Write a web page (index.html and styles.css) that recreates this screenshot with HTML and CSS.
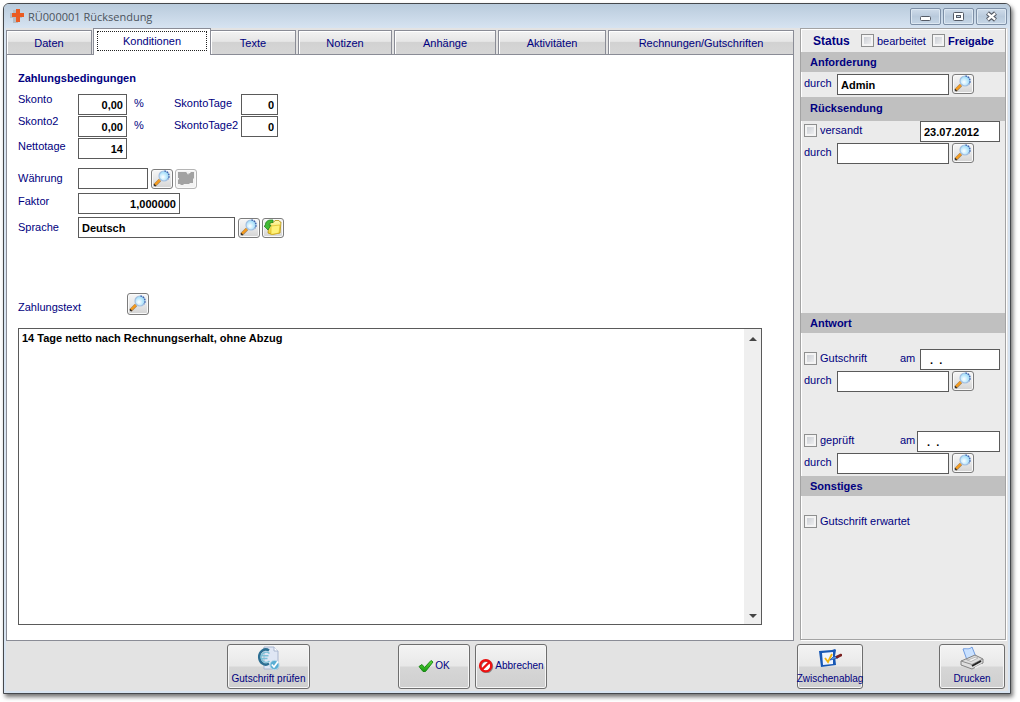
FILE: index.html
```html
<!DOCTYPE html>
<html lang="de">
<head>
<meta charset="utf-8">
<title>RÜ000001 Rücksendung</title>
<link rel="stylesheet" href="styles.css">
</head>
<body>
<svg class="defs" aria-hidden="true">
  <defs>
    <linearGradient id="handle" x1="0" y1="0" x2="1" y2="1"><stop offset="0" stop-color="#ffb53a"/><stop offset="1" stop-color="#d87708"/></linearGradient>
    <radialGradient id="lens" cx=".4" cy=".6"><stop offset="0" stop-color="#ffffff"/><stop offset="1" stop-color="#a5e0fb"/></radialGradient>
    <linearGradient id="folder" x1="0" y1="0" x2="0" y2="1"><stop offset="0" stop-color="#fffbb0"/><stop offset="1" stop-color="#f0cf25"/></linearGradient>
    <linearGradient id="tick" x1="0" y1="0" x2="0" y2="1"><stop offset="0" stop-color="#63dc3c"/><stop offset="1" stop-color="#159a10"/></linearGradient>
  </defs>
  <symbol id="search" viewBox="0 0 20 18">
    <path d="M8 10 2.500 15.500" stroke="#9a8468" stroke-width="3.200"/>
    <path d="M8 9.800 2.700 15" stroke="#f59a1c" stroke-width="2.400"/>
    <path d="m2 14.500 1.500 1.500" stroke="#222" stroke-width="1.400"/>
    <circle cx="12" cy="6" r="5" fill="url(#lens)" stroke="#a3bfe0" stroke-width="1.200"/>
    <path d="M12.500 1A5 5 0 0 1 16 9" fill="none" stroke="#3e66b0" stroke-width="1.400" stroke-dasharray="1.500 1"/>
  </symbol>
</svg>

<div class="window">
  <header class="titlebar">
    <svg class="app-icon" viewBox="0 0 14 14"><path d="M3 1h5v3h4v5H8v5H3V9H0V4h3z" fill="#b4bcc4"/><path d="M6 0h4v4h4v4h-4v5H6V8H2V4h4z" fill="#ea5b22"/></svg>
    <h1 class="title">RÜ000001 Rücksendung</h1>
    <button class="winbtn" aria-label="Minimieren"><svg viewBox="0 0 29 15"><rect x="9.500" y="7.500" width="10" height="4" rx="1" fill="#fff" stroke="#555b66"/></svg></button>
    <button class="winbtn" aria-label="Maximieren"><svg viewBox="0 0 29 15"><rect x="9.500" y="3.500" width="10" height="8" rx="1" fill="#fff" stroke="#555b66"/><rect x="12.500" y="6.500" width="4" height="2" fill="#c5d5e5" stroke="#555b66"/></svg></button>
    <button class="winbtn" aria-label="Schließen"><svg viewBox="0 0 29 15"><path d="m10.500 4 8 7m0-7-8 7" stroke="#555b66" stroke-width="4.400"/><path d="m10.800 4.300 7.400 6.400m0-6.400-7.400 6.400" stroke="#fff" stroke-width="2.200"/></svg></button>
  </header>

  <div class="client">
    <div class="main">
      <section class="left">
        <nav class="tabs" role="tablist">
          <button class="tab t-s" role="tab">Daten</button>
          <button class="tab active" role="tab" aria-selected="true"><span>Konditionen</span></button>
          <button class="tab t-s" role="tab">Texte</button>
          <button class="tab t-m" role="tab">Notizen</button>
          <button class="tab t-l" role="tab">Anhänge</button>
          <button class="tab t-xl" role="tab">Aktivitäten</button>
          <button class="tab t-fill" role="tab">Rechnungen/Gutschriften</button>
        </nav>
        <div class="panel">
          <h2 class="heading">Zahlungsbedingungen</h2>
          <div class="row">
            <label class="lbl high" for="skonto">Skonto</label>
            <input class="num w-num" id="skonto" value="0,00"><span class="pct">%</span>
            <label class="lbl2" for="stage">SkontoTage</label><input class="num w-day" id="stage" value="0">
          </div>
          <div class="row">
            <label class="lbl high" for="skonto2">Skonto2</label>
            <input class="num w-num" id="skonto2" value="0,00"><span class="pct">%</span>
            <label class="lbl2" for="stage2">SkontoTage2</label><input class="num w-day" id="stage2" value="0">
          </div>
          <div class="row">
            <label class="lbl" for="netto">Nettotage</label><input class="num w-num" id="netto" value="14">
          </div>
          <div class="row gap-top">
            <label class="lbl low" for="waehrung">Währung</label><input class="w-cur" id="waehrung">
            <button class="iconbtn" aria-label="Währung suchen"><svg><use href="#search"/></svg></button>
            <button class="iconbtn off" disabled aria-label="Währung öffnen"><svg viewBox="0 0 20 18"><path d="M2 2h8l1 1h3l1-1h3v6l-1 1v4h-3l-1 1H8l-1 1H5l-1-1H2v-4l1-1V8H2z" fill="#a2a2a2"/><path d="m11 3.500 1.500.500L14 2" fill="none" stroke="#fff" stroke-width=".8"/></svg></button>
          </div>
          <div class="row row-f">
            <label class="lbl" for="faktor">Faktor</label><input class="num w-fac" id="faktor" value="1,000000">
          </div>
          <div class="row">
            <label class="lbl low" for="sprache">Sprache</label><input class="w-lang" id="sprache" value="Deutsch">
            <button class="iconbtn" aria-label="Sprache suchen"><svg><use href="#search"/></svg></button>
            <button class="iconbtn" aria-label="Sprache öffnen"><svg viewBox="0 0 20 18"><path d="m6 4 5-1 1-1.500h4l1 1.500h1l-1 11-8 1.500L5 14z" fill="url(#folder)" stroke="#b8920c" stroke-width=".8"/><path d="m8 7 9-1-1 8-8 1.500z" fill="#fff27a" stroke="#d6b018" stroke-width=".6"/><path d="M10 1C5 .5 2 2.500 2.500 6.500L1 7l4 4 3-5-1.800.2C6 4.500 7.500 3.500 10 3.500z" fill="#42bb35" stroke="#157a18" stroke-width=".7"/></svg></button>
          </div>
          <div class="row row-text">
            <label class="lbl-text" for="ztext">Zahlungstext</label>
            <button class="iconbtn tall" aria-label="Zahlungstext suchen"><svg><use href="#search"/></svg></button>
          </div>
          <div class="memo">
            <textarea id="ztext">14 Tage netto nach Rechnungserhalt, ohne Abzug</textarea>
            <div class="scroll">
              <svg viewBox="0 0 8 4"><path d="m0 4 4-4 4 4z" fill="#444"/></svg>
              <svg viewBox="0 0 8 4"><path d="m0 0 4 4 4-4z" fill="#444"/></svg>
            </div>
          </div>
        </div>
      </section>

      <aside class="side">
        <div class="status">
          <strong>Status</strong>
          <label class="check"><input type="checkbox">bearbeitet</label>
          <label class="check bold"><input type="checkbox">Freigabe</label>
        </div>
        <h3 class="bar">Anforderung</h3>
        <div class="body b-anf">
          <div class="srow"><label for="d1">durch</label><input class="who" id="d1" value="Admin"><button class="iconbtn" aria-label="Suchen"><svg><use href="#search"/></svg></button></div>
        </div>
        <h3 class="bar tall-bar">Rücksendung</h3>
        <div class="body b-rueck">
          <div class="srow"><label class="check grow"><input type="checkbox">versandt</label><input class="date" aria-label="Datum" value="23.07.2012"></div>
          <div class="srow"><label for="d2">durch</label><input class="who" id="d2"><button class="iconbtn" aria-label="Suchen"><svg><use href="#search"/></svg></button></div>
        </div>
        <h3 class="bar">Antwort</h3>
        <div class="body b-antw">
          <div class="srow"><label class="check grow"><input type="checkbox">Gutschrift</label><label class="am" for="g1">am</label><input class="date" id="g1" value="  .  ."></div>
          <div class="srow"><label for="d3">durch</label><input class="who" id="d3"><button class="iconbtn" aria-label="Suchen"><svg><use href="#search"/></svg></button></div>
          <div class="srow second"><label class="check grow"><input type="checkbox">geprüft</label><label class="am tight" for="g2">am</label><input class="date wide" id="g2" value="  .  ."></div>
          <div class="srow"><label for="d4">durch</label><input class="who" id="d4"><button class="iconbtn" aria-label="Suchen"><svg><use href="#search"/></svg></button></div>
        </div>
        <h3 class="bar">Sonstiges</h3>
        <div class="body b-sonst">
          <label class="check"><input type="checkbox">Gutschrift erwartet</label>
        </div>
      </aside>
    </div>

    <footer class="footer">
      <button class="big b-check">
        <svg viewBox="0 0 24 26"><path d="M7 1h10l4 4v18H7z" fill="#dfe6f4" stroke="#a9b6cf"/><path d="M17 1v4h4" fill="#fff" stroke="#a9b6cf"/><path d="M12 4.500A6.500 7.500 0 1 0 12 17.500" fill="none" stroke="#2d6f93" stroke-width="2.600"/><path d="M12.500 7.500a5 5 0 1 0 0 7.500M4.500 9.800h7M4.500 12.500h6" fill="none" stroke="#7cc0d8" stroke-width="1.600"/><circle cx="17.500" cy="19" r="4.600" fill="#5aaed4" stroke="#b9dbea"/><path d="m14.800 18.500 2.200 2.500 4-5.500" fill="none" stroke="#fff" stroke-width="1.700"/></svg>
        <span>Gutschrift prüfen</span>
      </button>
      <button class="big line b-ok">
        <svg viewBox="0 0 16 14"><path d="m1 7.500 3-2 2.500 3L13 1.500l2 1.500-7.500 9.500H5z" fill="url(#tick)" stroke="#12800f" stroke-width=".9" stroke-linejoin="round"/></svg>
        <span>OK</span>
      </button>
      <button class="big line b-cancel">
        <svg viewBox="0 0 16 14"><circle cx="8.400" cy="7.400" r="5.600" fill="#fff" stroke="#888" stroke-width="2.400"/><circle cx="7.700" cy="6.800" r="5.600" fill="none" stroke="#ee1111" stroke-width="2.400"/><path d="m4 10.500 7.500-7.500" stroke="#ee1111" stroke-width="2.400"/></svg>
        <span>Abbrechen</span>
      </button>
      <button class="big b-clip">
        <svg viewBox="0 0 24 26"><path d="m1 5 13-1 3-1 1 1-1 6 1 9-15 2-1-8z" fill="#1657b5"/><path d="m4 7 11-1v12l-10 1z" fill="#eef4ff"/><path d="m7 12 3 4 4-8" fill="none" stroke="#f1b40e" stroke-width="1.800"/><path d="m12 14 3-3 5-1v2l-4 1z" fill="#5f9bea" stroke="#1d57ad" stroke-width=".8"/><path d="m19 11 4-2" stroke="#7a2020" stroke-width="2.600" stroke-linecap="round"/></svg>
        <span>Zwischenablag</span>
      </button>
      <button class="big b-print">
        <svg viewBox="0 0 24 26"><path d="M3 3c3-1 6 1 9-2l4 10-9 3z" fill="#c9e1ff" stroke="#6f9be0"/><path d="m1 15 5-2 9-4 8 4v4l-11 6-11-4z" fill="#dedede" stroke="#828282"/><path d="m1 15 11 3.500L23 13" fill="none" stroke="#8c8c8c"/><path d="m5 13 6 2.500 7-3.500-2-1-8 3z" fill="#f8f8f8" stroke="#aaa" stroke-width=".8"/><path d="m12 20 9-5" stroke="#222" stroke-width="2"/><path d="m15 22 7-3.500" stroke="#eee" stroke-width="1.500"/></svg>
        <span>Drucken</span>
      </button>
    </footer>
  </div>
</div>
</body>
</html>
```
FILE: styles.css
```css
* { box-sizing: border-box; }

body {
  margin: 0;
  padding: 3px 9px 8px 3px;
  min-height: 100vh;
  display: flex;
  background: #fff;
  color: #000080;
  font: 11px/14px "Liberation Sans", Arial, sans-serif;
}

button, input, textarea { font: inherit; color: inherit; margin: 0; }
h1, h2, h3 { margin: 0; }
.defs { position: absolute; width: 0; height: 0; }

.window {
  flex: 1;
  min-width: 0;
  display: flex;
  flex-direction: column;
  border: 1px solid #45484c;
  border-radius: 6px 6px 0 0;
  background: #d8e4f1;
  padding: 0 2px 2px;
  box-shadow: 2px 3px 4px rgba(0, 0, 0, .55);
}

.titlebar {
  display: flex;
  align-items: center;
  height: 24px;
  padding: 0 1px 0 3px;
  margin: 0 -2px;
  border-radius: 5px 5px 0 0;
  background: linear-gradient(#b9cbdc, #d6e3f1);
}
.app-icon { width: 14px; height: 14px; margin: 0 4px 0 3px; }
.title { flex: 1; padding-top: 2px; font: 11px/16px "Open Sans", "Noto Sans", sans-serif; color: #4b535c; }
.winbtn {
  width: 31px;
  height: 17px;
  padding: 0;
  margin-right: 2px;
  border: 1px solid #7d8fa6;
  border-radius: 2px;
  background: linear-gradient(#cfdcea, #b9cadc 50%, #c6d6e6);
  box-shadow: inset 0 0 0 1px #dde8f2;
}
.winbtn svg { display: block; width: 29px; height: 15px; }

.client { flex: 1; display: flex; flex-direction: column; background: #e3e3e3; }
.main { flex: 1; display: flex; gap: 6px; padding-right: 2px; }
.left { flex: 1; min-width: 0; display: flex; flex-direction: column; }

.tabs { display: flex; align-items: flex-end; gap: 2px; height: 26px; }
.tab {
  height: 24px;
  padding: 0;
  border: 1px solid #8a8c96;
  border-bottom: 0;
  background: linear-gradient(#f3f3f3, #e6e6e6 45%, #d2d2d2 50%, #d6d6d6);
  box-shadow: inset 1px 1px 0 #fff;
}
.t-s { width: 86px; }
.t-m { width: 94px; }
.t-l { width: 102px; }
.t-xl { width: 108px; }
.t-fill { flex: 1; }
.tab.active {
  position: relative;
  z-index: 1;
  width: 118px;
  height: 27px;
  margin: 0 -3px -1px -1px;
  padding: 1px 3px 3px;
  background: #fff;
}
.tab.active span { display: block; height: 20px; line-height: 19px; border: 1px dotted #222; }

.panel {
  flex: 1;
  display: flex;
  flex-direction: column;
  padding: 16px 31px 15px 11px;
  border: 1px solid #8a8c96;
  background: #fff;
}
.heading { font-size: 11px; line-height: 14px; margin-bottom: 9px; }

input, textarea {
  border: 1px solid #5a5a5a;
  border-radius: 0;
  background: #fff;
  color: #000;
  font-weight: bold;
  outline: 0;
}
input { height: 21px; padding: 0 3px; }
.num { text-align: right; }

.row { display: flex; align-items: flex-start; height: 22px; }
.lbl { width: 60px; padding-top: 1px; }
.lbl.high { padding-top: 0; line-height: 10px; }
.lbl.low { padding-top: 3px; }
.pct { width: 47px; padding: 2px 0 0 7px; }
.lbl2 { width: 67px; padding-top: 2px; }
.w-num { width: 49px; }
.w-day { width: 37px; }
.w-cur { width: 70px; }
.w-fac { width: 102px; }
.w-lang { width: 157px; }
.gap-top { margin-top: 8px; }
.row-f { margin: 3px 0 2px; }
.row-text { margin: 54px 0 13px; }
.lbl-text { width: 109px; padding-top: 7px; }

.iconbtn {
  width: 22px;
  height: 20px;
  margin: 1px 0 0 3px;
  padding: 0;
  border: 1px solid #7c7c7c;
  border-radius: 3px;
  background: linear-gradient(#f6f6f6, #e8e8e8 50%, #d3d3d3);
  box-shadow: inset 0 0 0 1px #fafafa;
}
.iconbtn + .iconbtn { margin-left: 2px; }
.iconbtn svg { display: block; width: 20px; height: 18px; }
.iconbtn.tall { height: 22px; margin: 0; }
.iconbtn.off { border-color: #b5b5b5; background: #f3f3f3; }

.memo { flex: 1; display: flex; min-height: 120px; border: 1px solid #5a5a5a; }
.memo textarea { flex: 1; border: 0; padding: 2px 3px; resize: none; }
.scroll {
  display: flex;
  flex-direction: column;
  justify-content: space-between;
  align-items: center;
  width: 17px;
  padding: 8px 0 6px;
  background: #efefef;
}
.scroll svg { width: 8px; height: 4px; }

.side {
  width: 206px;
  margin-bottom: 1px;
  border: 1px solid #a3a3a3;
  background: #ebebeb;
  box-shadow: inset 1px 1px 0 #fff, 1px 1px 0 #fff;
}
.status { display: flex; align-items: center; height: 23px; padding-left: 12px; }
.status strong { width: 48px; font-size: 12px; }
.check { display: flex; align-items: center; gap: 3px; margin-right: 6px; }
.check.bold { font-weight: bold; margin: 0; }
.check input {
  appearance: none;
  width: 13px;
  height: 13px;
  padding: 0;
  border: 1px solid #8e8f8f;
  background: linear-gradient(135deg, #c3c7ce, #f6f6f6);
  box-shadow: inset 0 0 0 2px #f4f4f4;
}
.bar { height: 20px; padding-left: 9px; font-size: 11px; line-height: 20px; background: #c0c0c0; }
.tall-bar { height: 24px; line-height: 22px; }
.body { padding: 0 5px 0 3px; }
.b-anf { padding-top: 2px; height: 25px; }
.b-rueck { height: 192px; }
.b-antw { padding-top: 16px; height: 143px; }
.b-sonst { padding-top: 18px; }
.srow { display: flex; align-items: flex-start; height: 22px; }
.srow > label { width: 33px; padding-top: 2px; }
.srow > .grow { flex: 1; width: auto; margin: 0; }
.srow .iconbtn { margin-top: 0; }
.srow > .am { width: 20px; padding-top: 2px; }
.srow > .tight { width: 17px; }
.second { margin-top: 38px; }
.who { width: 112px; }
.date { width: 80px; white-space: pre; }
.date.wide { width: 83px; }

.footer { display: flex; align-items: flex-start; height: 50px; padding: 3px 3px 0 0; }
.big {
  display: flex;
  flex-direction: column;
  align-items: center;
  height: 45px;
  padding: 1px 0 2px;
  border: 1px solid #6e6e6e;
  border-radius: 3px;
  background: linear-gradient(#f4f4f4, #e8e8e8 48%, #d6d6d6 52%, #cfcfcf);
  box-shadow: inset 0 0 0 1px #f6f6f6;
  font-size: 10px;
  white-space: nowrap;
}
.big svg { flex: none; width: 24px; height: 26px; }
.big.line { flex-direction: row; justify-content: center; gap: 1px; }
.big.line svg { width: 16px; height: 14px; }
.b-check { width: 83px; margin-left: 221px; }
.b-ok { width: 72px; margin-left: 88px; }
.b-cancel { width: 72px; margin-left: 5px; }
.b-clip { width: 66px; margin-left: auto; }
.b-print { width: 66px; margin-left: 76px; }
```
